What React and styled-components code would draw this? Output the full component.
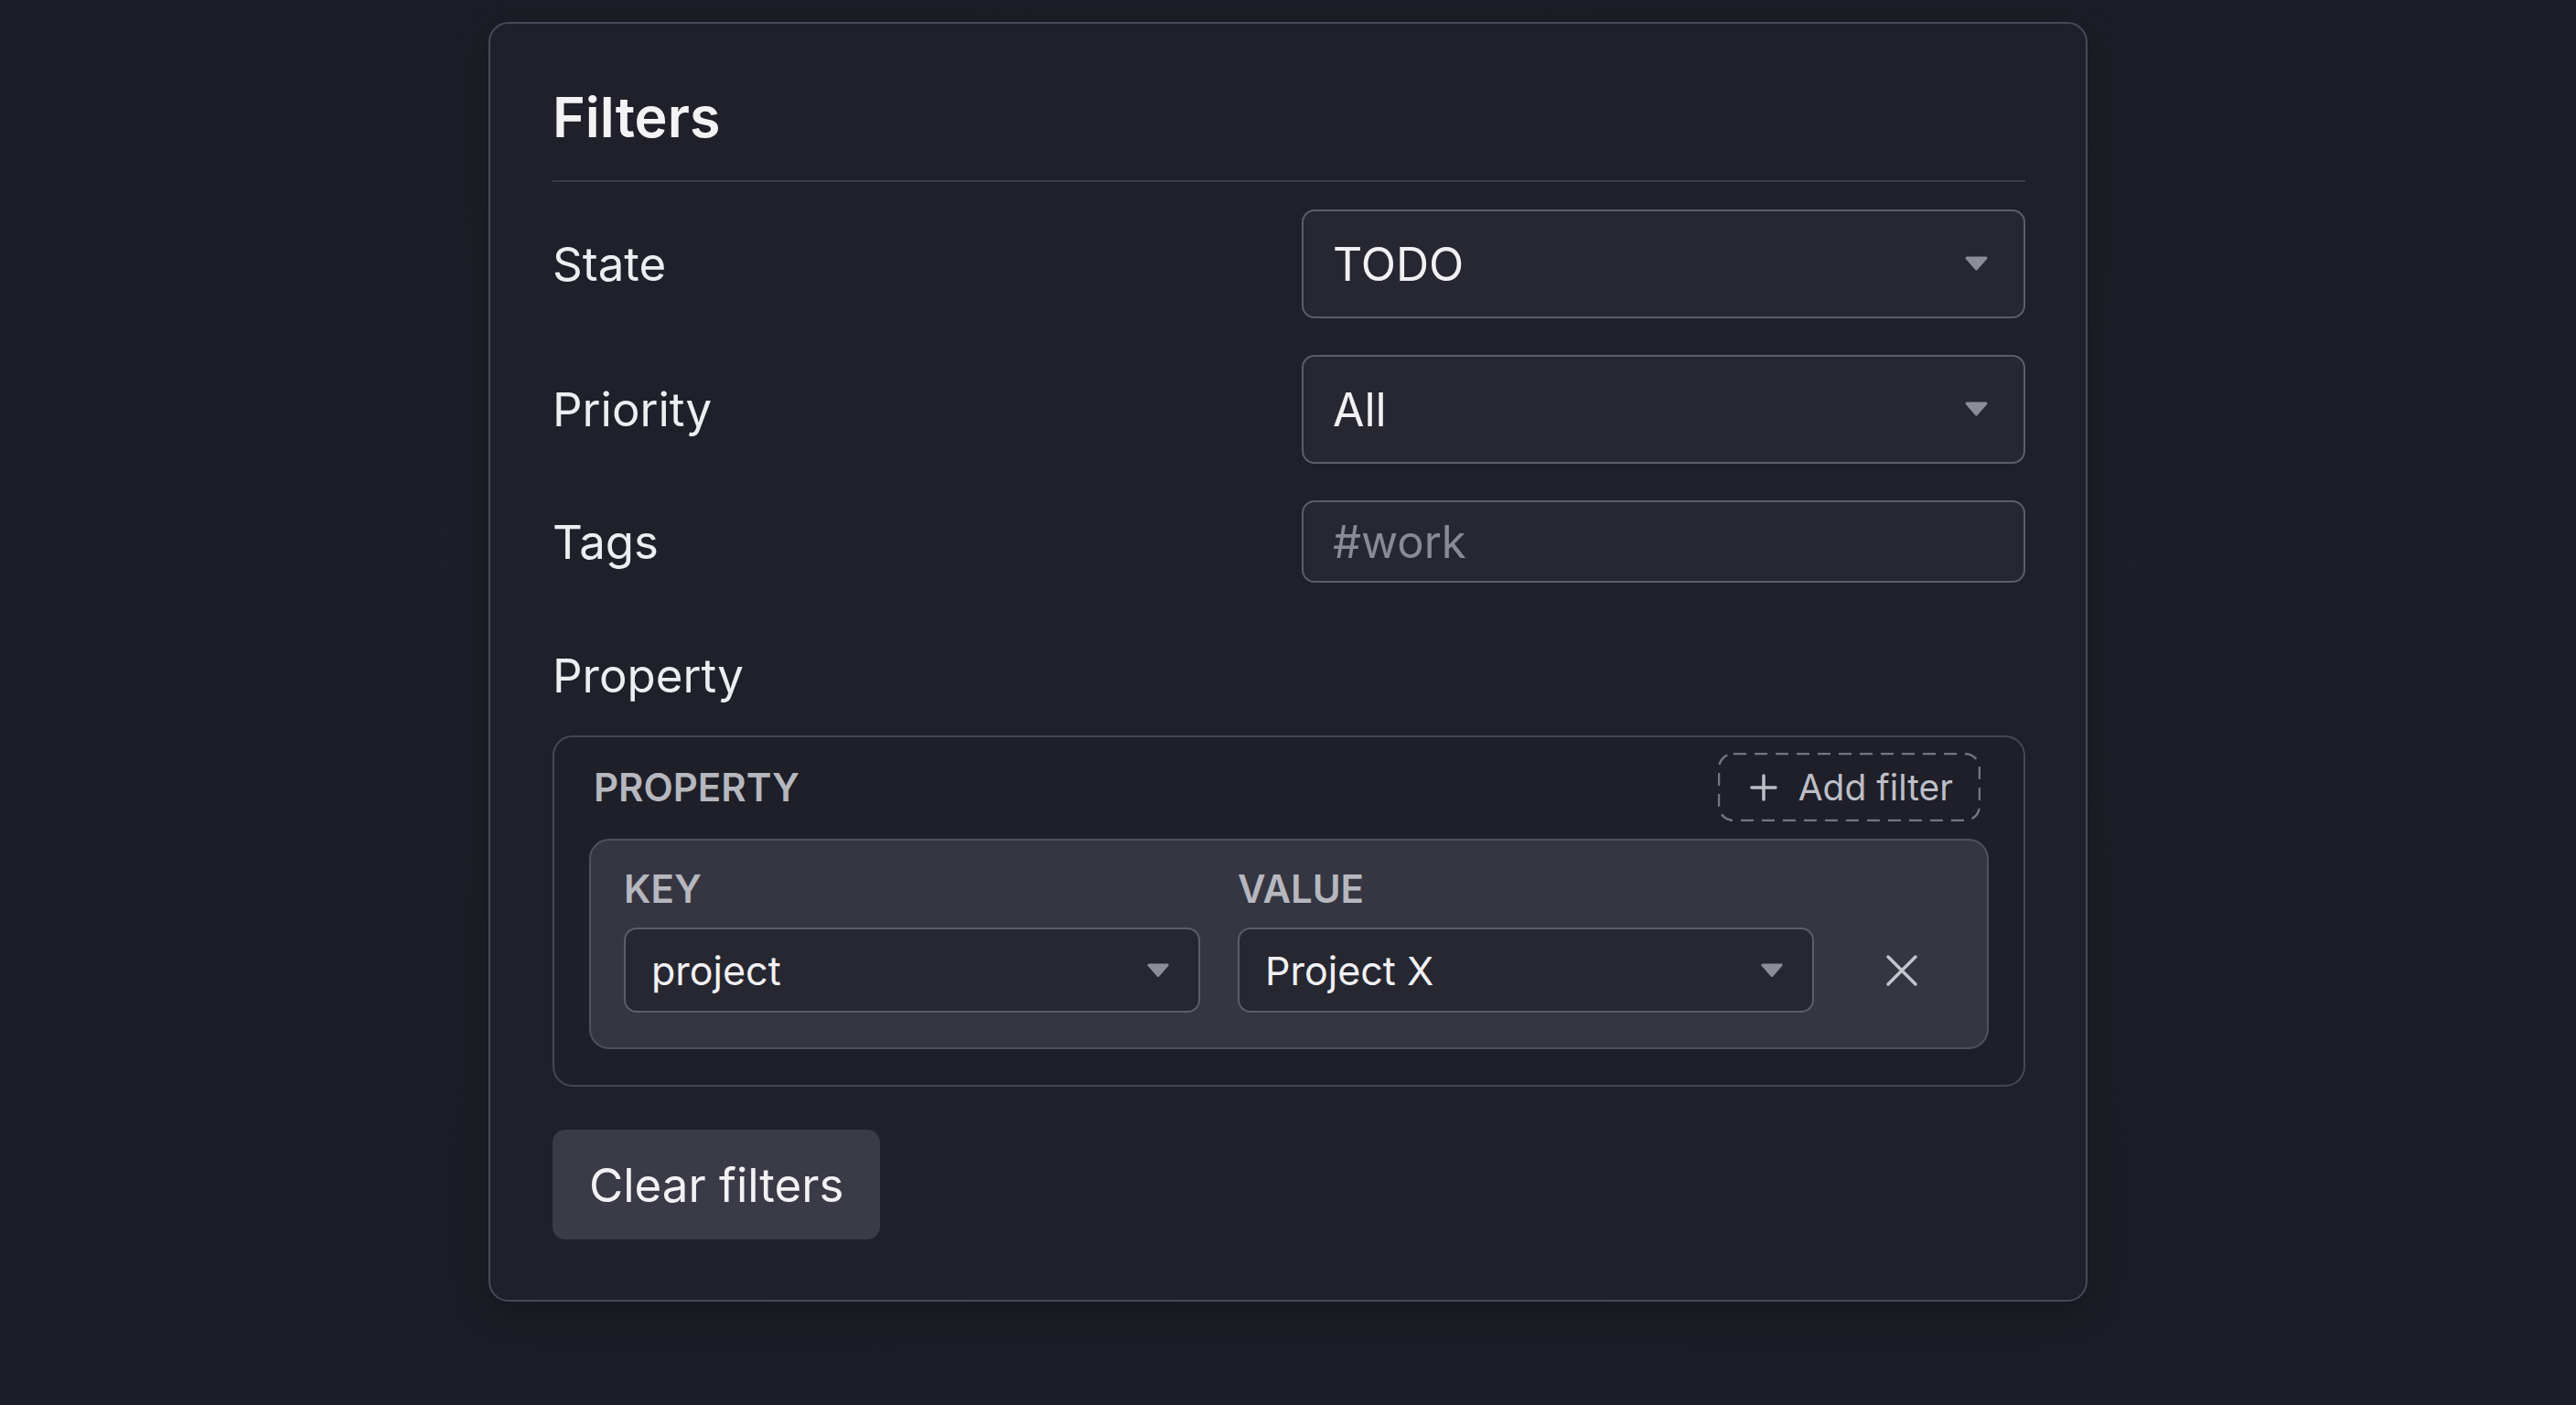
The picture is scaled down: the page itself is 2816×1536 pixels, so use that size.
import React from 'react';
import styled, { createGlobalStyle } from 'styled-components';

const GlobalStyle = createGlobalStyle`
  * {
    box-sizing: border-box;
  }

  html, body {
    margin: 0;
    padding: 0;
    background: #1c1d26;
  }

  body {
    font-family: Inter, "Noto Sans", sans-serif;
    color: #eeeff2;
  }
`;

const dashed = encodeURIComponent(
  "<svg xmlns='http://www.w3.org/2000/svg' width='100%' height='100%'><rect x='1' y='1' width='calc(100% - 2px)' height='calc(100% - 2px)' rx='16' ry='16' fill='none' stroke='#747684' stroke-width='2.5' stroke-dasharray='14 9'/></svg>"
);

const Page = styled.div`
  min-height: 1536px;
  display: flex;
  justify-content: center;
  align-items: flex-start;
  padding-top: 24px;
  background: radial-gradient(ellipse at 50% 40%, #1f2029 0%, #1c1d26 70%);
`;

const Card = styled.section`
  width: 1748px;
  background: #1f2029;
  border: 2px solid #474a58;
  border-radius: 22px;
  padding: 65px 66px 66px 68px;
  box-shadow: 0 10px 40px rgba(0, 0, 0, 0.25);
`;

const Title = styled.h2`
  margin: 0;
  padding-bottom: 32px;
  border-bottom: 2px solid #393b48;
  font-size: 61px;
  line-height: 74px;
  font-weight: 600;
  color: #f3f3f5;
`;

const Fields = styled.div`
  display: grid;
  grid-template-columns: 1fr 791px;
  column-gap: 28px;
  row-gap: 40px;
  align-items: center;
  margin-top: 30px;
`;

const Label = styled.label`
  font-size: 51px;
  line-height: 63px;
  color: #eceef1;
`;

const SelectBox = styled.div`
  display: flex;
  align-items: center;
  justify-content: space-between;
  height: ${p => (p.$compact ? '93px' : '119px')};
  padding: ${p => (p.$compact ? '0 31px 0 28px' : '0 38px 0 32px')};
  background: #262731;
  border: 2px solid #5b5d6a;
  border-radius: 14px;
  font-size: ${p => (p.$compact ? '43px' : '50px')};
  color: #f1f1f4;
`;

const TextInput = styled.input`
  height: 90px;
  width: 100%;
  padding: 0 32px;
  background: #262731;
  border: 2px solid #5b5d6a;
  border-radius: 14px;
  font-family: inherit;
  font-size: 49px;
  color: #f1f1f4;
  outline: none;

  &::placeholder {
    color: #898a94;
  }
`;

const Section = styled.div`
  margin-top: 70px;
  display: flex;
  flex-direction: column;
  gap: 34px;
`;

const PropBox = styled.div`
  border: 2px solid #464856;
  border-radius: 22px;
  background: #1e1f28;
  padding: 17px 38px 39px;
`;

const PropHeader = styled.div`
  display: flex;
  align-items: center;
  justify-content: space-between;
  padding: 0 9px 0 5px;
  margin-bottom: 19px;
`;

const Caps = styled.span`
  font-size: ${p => p.$size || 42}px;
  line-height: 52px;
  font-weight: 600;
  color: #b6b7bf;
`;

const AddButton = styled.button`
  display: flex;
  align-items: center;
  gap: 23px;
  height: 75px;
  padding: 0 30px 0 35px;
  border: none;
  border-radius: 16px;
  background: url("data:image/svg+xml,${dashed}") no-repeat;
  background-size: 100% 100%;
  font-family: inherit;
  font-size: 39px;
  color: #bdbec6;
  cursor: pointer;
`;

const Row = styled.div`
  display: grid;
  grid-template-columns: 1fr 1fr 110px;
  column-gap: 41px;
  row-gap: 16px;
  align-items: center;
  padding: 27px 38px 38px 36px;
  background: #353641;
  border: 2px solid #50525e;
  border-radius: 22px;
`;

const RemoveButton = styled.button`
  display: flex;
  align-items: center;
  justify-content: center;
  height: 93px;
  padding: 0;
  border: none;
  background: transparent;
  cursor: pointer;
`;

const ClearButton = styled.button`
  margin-top: 47px;
  height: 120px;
  padding: 0 40px;
  border: none;
  border-radius: 14px;
  background: #3a3b47;
  font-family: inherit;
  font-size: 51px;
  font-weight: 400;
  color: #f2f2f5;
  cursor: pointer;
`;

const Arrow = ({ size = 27 }) => (
  <svg width={size} height={size * 0.6} viewBox="0 0 27 16">
    <path d="M3 2 H24 L13.5 14 Z" fill="#8c8d96" stroke="#8c8d96" strokeWidth="3" strokeLinejoin="round" />
  </svg>
);

const Plus = () => (
  <svg width="30" height="30" viewBox="0 0 30 30">
    <path d="M15 2 V28 M2 15 H28" stroke="#bdbec6" strokeWidth="3.5" strokeLinecap="round" />
  </svg>
);

const Cross = () => (
  <svg width="36" height="36" viewBox="0 0 36 36">
    <path d="M3 3 L33 33 M33 3 L3 33" stroke="#c4c5cc" strokeWidth="3.5" strokeLinecap="round" />
  </svg>
);

const Select = ({ value, compact }) => (
  <SelectBox $compact={compact}>
    <span>{value}</span>
    <Arrow size={compact ? 26 : 27} />
  </SelectBox>
);

export default function App() {
  return (
    <Page>
      <GlobalStyle />
      <Card>
        <Title>Filters</Title>
        <Fields>
          <Label>State</Label>
          <Select value="TODO" />
          <Label>Priority</Label>
          <Select value="All" />
          <Label>Tags</Label>
          <TextInput placeholder="#work" />
        </Fields>

        <Section>
          <Label>Property</Label>
          <PropBox>
            <PropHeader>
              <Caps>PROPERTY</Caps>
              <AddButton>
                <Plus />
                Add filter
              </AddButton>
            </PropHeader>
            <Row>
              <Caps>KEY</Caps>
              <Caps>VALUE</Caps>
              <span />
              <Select value="project" compact />
              <Select value="Project X" compact />
              <RemoveButton aria-label="Remove">
                <Cross />
              </RemoveButton>
            </Row>
          </PropBox>
        </Section>

        <ClearButton>Clear filters</ClearButton>
      </Card>
    </Page>
  );
}
